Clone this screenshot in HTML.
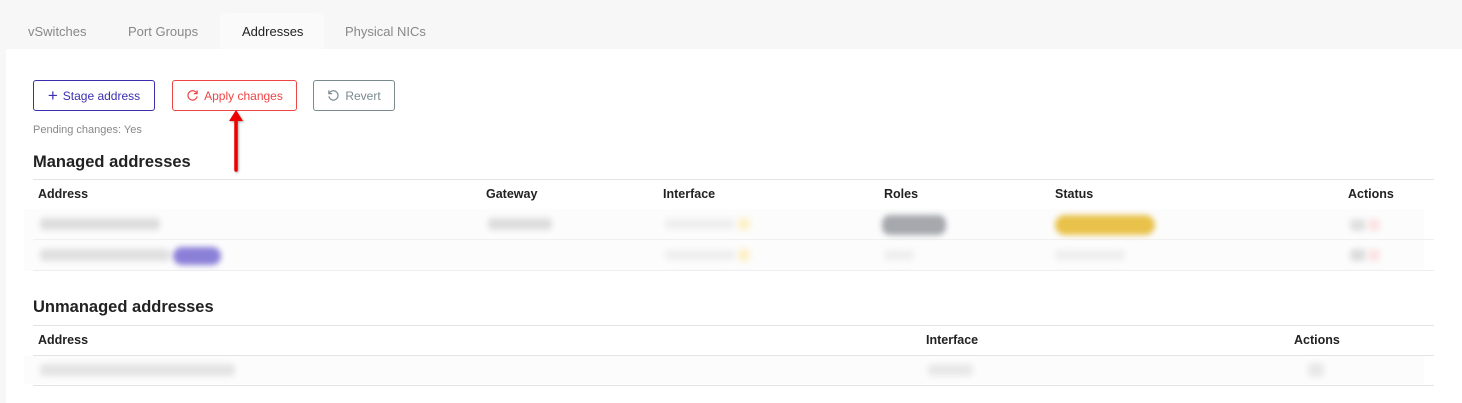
<!DOCTYPE html>
<html><head><meta charset="utf-8"><style>
*{margin:0;padding:0;box-sizing:border-box}
body{width:1462px;height:403px;background:#f7f7f7;font-family:"Liberation Sans","DejaVu Sans",sans-serif;position:relative;overflow:hidden;color:#222}
.a{position:absolute}
.tab{position:absolute;top:24px;font-size:13px;color:#888}
.panel{position:absolute;left:6px;top:49px;width:1456px;height:354px;background:#fff}
.btn{position:absolute;top:80px;height:31px;border:1px solid;border-radius:3px;font-size:12px;display:flex;align-items:center;justify-content:center;gap:5px}
.th{position:absolute;font-size:12.5px;font-weight:bold;color:#222}
.line{position:absolute;height:1px;background:#e4e4e4}
.bl{position:absolute;filter:blur(3px);border-radius:4px}
</style></head><body>
<div class="a" style="left:220px;top:13px;width:104px;height:40px;background:#fafafa;border-radius:6px 6px 0 0"></div>
<div class="tab" style="left:28px">vSwitches</div>
<div class="tab" style="left:128px">Port Groups</div>
<div class="tab" style="left:242px;color:#222">Addresses</div>
<div class="tab" style="left:345px">Physical NICs</div>
<div class="panel"></div>

<div class="btn" style="left:33px;width:122px;border-color:#3b2fb0;color:#3b2fb0"><span style="font-size:17px;line-height:10px">+</span>Stage address</div>
<div class="btn" style="left:172px;width:125px;border-color:#f04444;color:#f04444"><svg width="13" height="13" viewBox="0 0 14 14"><path d="M11.5 4.5A5 5 0 1 0 12 8" fill="none" stroke="#f04444" stroke-width="1.3"/><path d="M12 1.5v3.5h-3.5" fill="none" stroke="#f04444" stroke-width="1.3"/></svg>Apply changes</div>
<div class="btn" style="left:313px;width:82px;border-color:#7a8a90;color:#7a8a90"><svg width="13" height="13" viewBox="0 0 14 14"><path d="M2.5 4.5A5 5 0 1 1 2 8" fill="none" stroke="#7a8a90" stroke-width="1.3"/><path d="M2 1.5v3.5h3.5" fill="none" stroke="#7a8a90" stroke-width="1.3"/></svg>Revert</div>

<svg class="a" style="left:226px;top:106px;filter:drop-shadow(1px 1px 1px rgba(0,0,0,.35))" width="20" height="68" viewBox="0 0 20 68"><path d="M10 8V64" stroke="#e00" stroke-width="3.5" stroke-linecap="round"/><path d="M3 15L10 4L17 15Z" fill="#e00"/></svg>

<div class="a" style="left:33px;top:124px;font-size:11px;color:#888">Pending changes: Yes</div>
<div class="a" style="left:33px;top:153px;font-size:16.5px;font-weight:bold">Managed addresses</div>
<div class="line" style="left:33px;top:179px;width:1401px"></div>
<div class="th" style="left:38px;top:187px">Address</div>
<div class="th" style="left:486px;top:187px">Gateway</div>
<div class="th" style="left:663px;top:187px">Interface</div>
<div class="th" style="left:884px;top:187px">Roles</div>
<div class="th" style="left:1055px;top:187px">Status</div>
<div class="th" style="left:1348px;top:187px">Actions</div>
<div class="a" style="left:24px;top:209px;width:1400px;height:62px;background:#fcfcfc"></div>
<div class="line" style="left:33px;top:239px;width:1401px;background:#f0f0f0"></div>
<div class="line" style="left:33px;top:270px;width:1401px;background:#eee"></div>
<div class="bl" style="left:40px;top:218px;width:120px;height:12px;background:#ddd"></div>
<div class="bl" style="left:488px;top:218px;width:64px;height:12px;background:#ddd"></div>
<div class="bl" style="left:665px;top:219px;width:70px;height:10px;background:#eee"></div>
<div class="bl" style="left:738px;top:218px;width:12px;height:12px;background:#fdf0c8"></div>
<div class="bl" style="left:882px;top:215px;width:64px;height:20px;background:#a5a8ad;border-radius:8px"></div>
<div class="bl" style="left:1055px;top:215px;width:100px;height:20px;background:#e8c24a;border-radius:10px"></div>
<div class="bl" style="left:1350px;top:219px;width:16px;height:12px;background:#e0e0e0"></div>
<div class="bl" style="left:1368px;top:219px;width:12px;height:12px;background:#fbe3e3"></div>
<div class="bl" style="left:40px;top:249px;width:130px;height:12px;background:#e0e0e0"></div>
<div class="bl" style="left:173px;top:247px;width:48px;height:18px;background:#8b80d8;border-radius:9px"></div>
<div class="bl" style="left:665px;top:250px;width:70px;height:10px;background:#eee"></div>
<div class="bl" style="left:738px;top:249px;width:12px;height:12px;background:#fdf0c8"></div>
<div class="bl" style="left:884px;top:250px;width:30px;height:10px;background:#eee"></div>
<div class="bl" style="left:1055px;top:250px;width:70px;height:10px;background:#eee"></div>
<div class="bl" style="left:1350px;top:249px;width:16px;height:12px;background:#ddd"></div>
<div class="bl" style="left:1368px;top:249px;width:12px;height:12px;background:#fbe3e3"></div>

<div class="a" style="left:33px;top:298px;font-size:16.5px;font-weight:bold">Unmanaged addresses</div>
<div class="line" style="left:33px;top:325px;width:1401px"></div>
<div class="th" style="left:38px;top:333px">Address</div>
<div class="th" style="left:926px;top:333px">Interface</div>
<div class="th" style="left:1294px;top:333px">Actions</div>
<div class="line" style="left:33px;top:355px;width:1401px"></div>
<div class="a" style="left:24px;top:356px;width:1400px;height:28px;background:#fcfcfc"></div>
<div class="line" style="left:33px;top:385px;width:1401px"></div>
<div class="bl" style="left:40px;top:364px;width:195px;height:12px;background:#e4e4e4"></div>
<div class="bl" style="left:928px;top:364px;width:45px;height:12px;background:#e8e8e8"></div>
<div class="bl" style="left:1308px;top:363px;width:16px;height:14px;background:#e8e8e8"></div>
</body></html>
